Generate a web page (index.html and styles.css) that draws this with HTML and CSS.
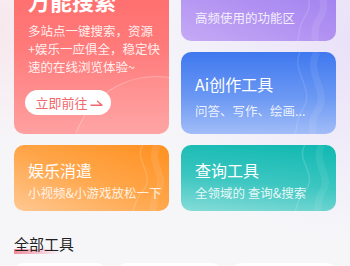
FILE: index.html
```html
<!DOCTYPE html>
<html lang="zh">
<head>
<meta charset="utf-8">
<title>工具</title>
<link rel="stylesheet" href="styles.css">
</head>
<body>
<div class="page">
  <div class="top">
    <div class="card card-red">
      <div class="circle"></div>
      <div class="red-title">万能搜索</div>
      <div class="red-desc">
        <span>多站点一键搜索，资源</span>
        <span>+娱乐一应俱全，稳定快</span>
        <span>速的在线浏览体验~</span>
      </div>
      <div class="btn">立即前往
        <svg class="arrow" width="13" height="8" viewBox="0 0 13 8"><path d="M1 6.2H12L7.5 2.2" fill="none" stroke="#f0686b" stroke-width="1.4" stroke-linecap="round" stroke-linejoin="round"/></svg>
      </div>
    </div>
    <div class="right-col">
      <div class="card card-purple">
        <svg class="waves" viewBox="0 0 40 82" preserveAspectRatio="none"><path d="M14 0C4 20 26 38 14 58C8 68 10 76 8 82" fill="none" stroke="rgba(255,255,255,0.14)" stroke-width="1.2"/><path d="M26 0C16 22 38 40 26 60C20 70 24 78 22 82" fill="none" stroke="rgba(255,255,255,0.09)" stroke-width="6"/></svg>
        <div class="t">常用功能</div>
        <div class="d">高频使用的功能区</div>
      </div>
      <div class="card card-blue">
        <svg class="waves" viewBox="0 0 40 82" preserveAspectRatio="none"><path d="M10 0C2 20 24 38 12 58C6 68 8 76 6 82" fill="none" stroke="rgba(255,255,255,0.12)" stroke-width="1.2"/><path d="M24 0C14 22 36 40 24 60C18 70 22 78 20 82" fill="none" stroke="rgba(255,255,255,0.08)" stroke-width="6"/></svg>
        <div class="t">Ai创作工具</div>
        <div class="d">问答、写作、绘画...</div>
      </div>
    </div>
  </div>
  <div class="row2">
    <div class="card small card-orange">
      <svg class="waves" viewBox="0 0 40 66" preserveAspectRatio="none"><path d="M18 0C10 16 30 30 18 46C12 54 12 60 10 66" fill="none" stroke="rgba(255,255,255,0.16)" stroke-width="1.2"/><path d="M30 0C22 18 40 32 30 48C26 56 28 62 26 66" fill="none" stroke="rgba(255,255,255,0.09)" stroke-width="6"/></svg>
      <div class="t">娱乐消遣</div>
      <div class="d">小视频&amp;小游戏放松一下</div>
    </div>
    <div class="card small card-teal">
      <svg class="waves" viewBox="0 0 40 66" preserveAspectRatio="none"><path d="M14 0C6 16 26 30 14 46C8 54 8 60 6 66" fill="none" stroke="rgba(255,255,255,0.16)" stroke-width="1.2"/><path d="M28 0C20 18 38 32 28 48C24 56 26 62 24 66" fill="none" stroke="rgba(255,255,255,0.08)" stroke-width="6"/></svg>
      <div class="t">查询工具</div>
      <div class="d">全领域的 查询&amp;搜索</div>
    </div>
  </div>
  <div class="heading"><span class="heading-text">全部工具</span></div>
  <div class="tools">
    <div class="tool"></div>
    <div class="tool"></div>
    <div class="tool"></div>
  </div>
</div>
</body>
</html>
```

FILE: styles.css
```css
html, body {
  margin: 0;
  padding: 0;
  width: 350px;
  height: 266px;
  overflow: hidden;
}
body {
  font-family: "Noto Sans CJK SC", "Noto Sans", sans-serif;
  background:
    radial-gradient(ellipse 90px 120px at 0px 30px, rgba(248, 226, 232, 0.7), rgba(248, 226, 232, 0) 100%),
    radial-gradient(ellipse 220px 200px at 360px 40px, rgba(232, 222, 248, 0.9), rgba(232, 222, 248, 0) 100%),
    #f6f6f9;
}
.page {
  padding: 0 14px;
}
.top {
  margin-top: -41px;
  display: grid;
  grid-template-columns: 155px 155px;
  column-gap: 12px;
  height: 175px;
}
.card {
  position: relative;
  border-radius: 10px;
  overflow: hidden;
  color: #fff;
  box-sizing: border-box;
}
.card-red {
  background: linear-gradient(180deg, #ff6767 0%, #ff7a7a 50%, #ffa0a0 100%);
  padding: 26px 8px 0 14px;
}
.circle {
  position: absolute;
  left: 57px;
  top: 117px;
  width: 168px;
  height: 168px;
  border-radius: 50%;
  border: 1px solid rgba(255, 255, 255, 0.26);
  background: rgba(255, 255, 255, 0.05);
}
.red-title {
  font-size: 22px;
  font-weight: 700;
  line-height: 30px;
}
.red-desc {
  margin-top: 7px;
  font-size: 12.5px;
  line-height: 18px;
  color: rgba(255, 255, 255, 0.9);
}
.red-desc span {
  display: block;
  white-space: nowrap;
}
.btn {
  position: relative;
  margin-top: 14px;
  margin-left: -3px;
  width: 86px;
  height: 25px;
  border-radius: 13px;
  background: #fff;
  color: #f0686b;
  font-size: 13px;
  line-height: 25px;
  display: flex;
  align-items: center;
  justify-content: center;
  gap: 2px;
  box-sizing: border-box;
  padding-left: 2px;
}
.arrow {
  display: block;
}
.right-col {
  display: flex;
  flex-direction: column;
  gap: 11px;
}
.right-col .card {
  height: 82px;
  padding: 20px 10px 0 14px;
}
.card-purple {
  background: linear-gradient(200deg, #9576ee 0%, #b293f2 60%, #c5aaf5 100%);
}
.card-blue {
  background: linear-gradient(180deg, #3f78ef 0%, #6b98f3 55%, #a2bdf8 100%);
}
.t {
  position: relative;
  font-size: 16px;
  line-height: 24px;
  white-space: nowrap;
}
.d {
  position: relative;
  margin-top: 6px;
  font-size: 12.5px;
  line-height: 18px;
  color: rgba(255, 255, 255, 0.86);
  white-space: nowrap;
}
.waves {
  position: absolute;
  right: 0;
  top: 0;
  width: 48px;
  height: 100%;
}
.row2 {
  margin-top: 11px;
  display: grid;
  grid-template-columns: 155px 155px;
  column-gap: 12px;
}
.card.small {
  height: 66px;
  padding: 13px 10px 0 14px;
}
.card.small .d {
  margin-top: 2px;
}
.card-orange {
  background: linear-gradient(200deg, #ff9020 0%, #ffa64a 50%, #ffc892 100%);
}
.card-teal {
  background: linear-gradient(185deg, #10b8b1 0%, #3cc6c1 55%, #86dcd8 100%);
}
.heading {
  margin-top: 20px;
  height: 22px;
}
.heading-text {
  position: relative;
  z-index: 0;
  display: inline-block;
  font-size: 15px;
  line-height: 22px;
  color: #222;
}
.heading-text::before {
  content: "";
  position: absolute;
  left: 0;
  bottom: 1px;
  width: 46px;
  height: 5px;
  background: linear-gradient(90deg, rgba(240, 110, 130, 0.8), rgba(240, 110, 130, 0));
  z-index: -1;
}
.tools {
  margin-top: 10px;
  display: grid;
  grid-template-columns: 92px 104px 104px;
  column-gap: 11px;
}
.tool {
  height: 80px;
  background: #fff;
  border-radius: 9px;
}
```
